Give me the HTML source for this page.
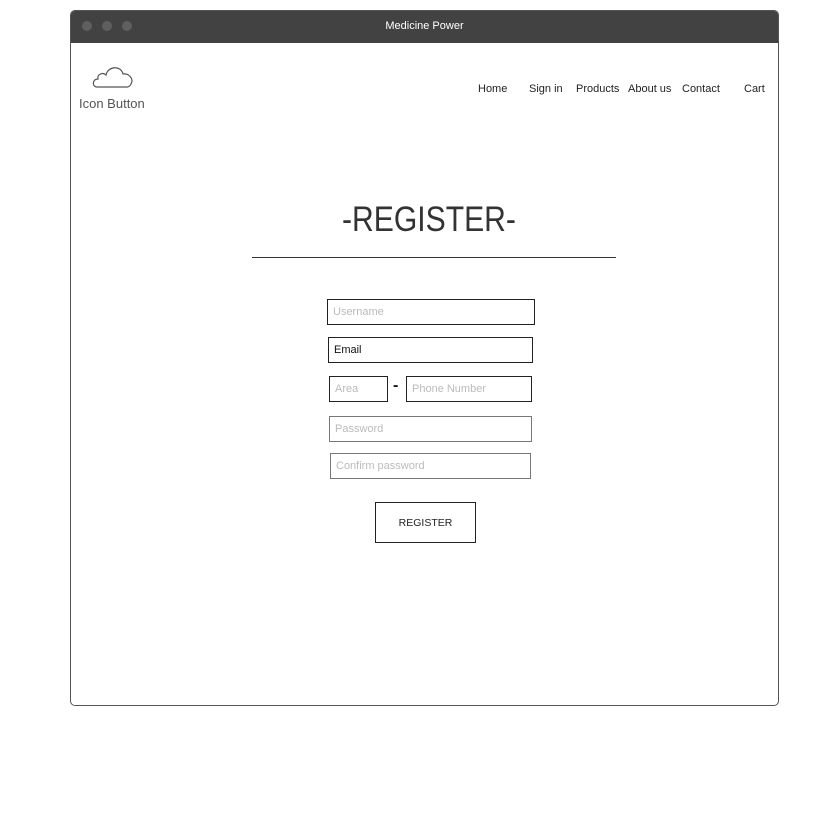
<!DOCTYPE html>
<html><head><meta charset="utf-8"><style>
*{margin:0;padding:0;box-sizing:border-box}
body{width:829px;height:815px;background:#fff;font-family:"Liberation Sans",sans-serif;position:relative;overflow:hidden}
.win{position:absolute;left:70px;top:10px;width:709px;height:696px;border:1px solid #555;border-radius:5px;overflow:hidden}
.bar{position:absolute;left:0;top:0;width:100%;height:32px;background:#424242;color:#fff;font-size:11px;text-align:center;line-height:31px}
.dot{position:absolute;top:10px;width:10px;height:10px;border-radius:50%;background:#5f5f5f}
.a{position:absolute}
.nav{position:absolute;top:83px;font-size:11px;color:#222}
.in{position:absolute;border:1px solid #222;font-size:11px;color:#bbb;padding-left:5px;line-height:24px}
.g{border-color:#777}
</style></head><body>
<div class="win">
<div class="bar">Medicine Power
<div class="dot" style="left:11px"></div><div class="dot" style="left:31px"></div><div class="dot" style="left:51px"></div></div>
</div>
<svg class="a" style="left:91px;top:62px" width="44" height="28" viewBox="0 0 44 28"><path d="M6 25 C1 25 1 17 7 17 C6 12 12 10 15 13 C17 4 30 3 32 12 C38 11 43 17 40 22 C39 24 38 25 36 25 Z" fill="none" stroke="#555" stroke-width="1.2"/></svg>
<div class="a" style="left:79px;top:96px;font-size:13px;color:#555">Icon Button</div>
<div class="nav" style="left:478px">Home</div>
<div class="nav" style="left:529px">Sign in</div>
<div class="nav" style="left:576px">Products</div>
<div class="nav" style="left:628px">About us</div>
<div class="nav" style="left:682px">Contact</div>
<div class="nav" style="left:744px">Cart</div>
<div class="a" style="left:247px;top:200px;width:364px;text-align:center;font-size:35px;color:#333;transform:scaleX(0.86)">-REGISTER-</div>
<div class="a" style="left:252px;top:257px;width:364px;height:1px;background:#333"></div>
<div class="in" style="left:327px;top:299px;width:208px;height:26px">Username</div>
<div class="in" style="left:328px;top:337px;width:205px;height:26px;color:#111">Email</div>
<div class="in" style="left:329px;top:376px;width:59px;height:26px">Area</div>
<div class="a" style="left:393px;top:377px;font-size:16px;font-weight:bold;color:#111">-</div>
<div class="in" style="left:406px;top:376px;width:126px;height:26px">Phone Number</div>
<div class="in g" style="left:329px;top:416px;width:203px;height:26px">Password</div>
<div class="in g" style="left:330px;top:453px;width:201px;height:26px">Confirm password</div>
<div class="a" style="left:375px;top:502px;width:101px;height:41px;border:1px solid #222;font-size:10.5px;color:#222;text-align:center;line-height:40px">REGISTER</div>
</body></html>
